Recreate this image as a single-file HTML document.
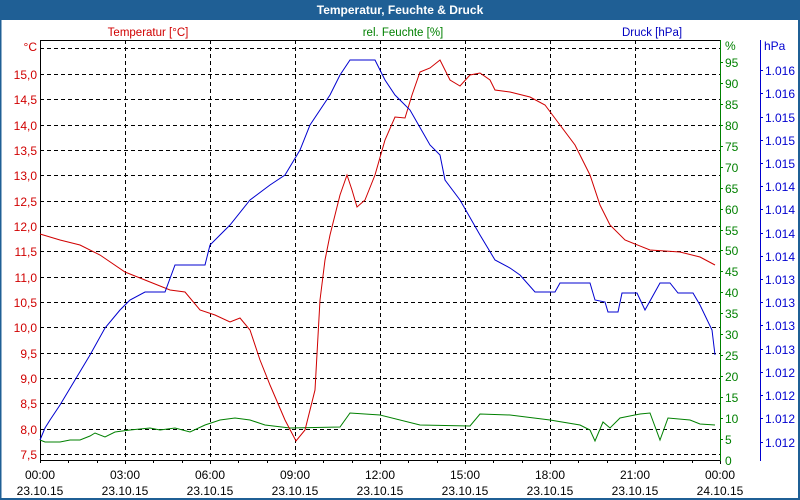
<!DOCTYPE html>
<html><head><meta charset="utf-8"><style>
html,body{margin:0;padding:0;background:#fff;}
body{width:800px;height:500px;overflow:hidden;position:relative;font-family:"Liberation Sans",sans-serif;}
</style></head><body>
<svg width="800" height="500" xmlns="http://www.w3.org/2000/svg" style="position:absolute;left:0;top:0" font-family="Liberation Sans, sans-serif" font-size="12">
<rect x="0" y="0" width="800" height="500" fill="#fff"/>
<rect x="0" y="0" width="800" height="20" fill="#1f5f95"/>
<rect x="0" y="0" width="1.5" height="500" fill="#1f5f95"/>
<rect x="798" y="0" width="2" height="500" fill="#1f5f95"/>
<rect x="0" y="498" width="800" height="2" fill="#1f5f95"/>
<text x="400" y="14" fill="#fff" font-weight="bold" font-size="12" text-anchor="middle">Temperatur, Feuchte &amp; Druck</text>
<text x="148" y="36" fill="#d00000" text-anchor="middle" font-size="11.5">Temperatur [°C]</text>
<text x="403" y="36" fill="#008000" text-anchor="middle" font-size="11.5">rel. Feuchte [%]</text>
<text x="652" y="36" fill="#0000c0" text-anchor="middle" font-size="11.5">Druck [hPa]</text>
<g stroke="#000" stroke-width="1" stroke-dasharray="4,3" fill="none">
<path d="M40 48.5H720M40 74.5H720M40 99.5H720M40 125.5H720M40 150.5H720M40 175.5H720M40 201.5H720M40 226.5H720M40 251.5H720M40 277.5H720M40 302.5H720M40 327.5H720M40 353.5H720M40 378.5H720M40 403.5H720M40 429.5H720M40 454.5H720"/>
<path d="M125.5 40V460M210.5 40V460M295.5 40V460M380.5 40V460M465.5 40V460M550.5 40V460M635.5 40V460"/>
</g>
<path d="M40.5 40V460.5H720M40 40.5H720" stroke="#000" fill="none"/>
<path d="M40.5 460v3M68.5 460v3M97.5 460v3M125.5 460v4M153.5 460v3M182.5 460v3M210.5 460v4M238.5 460v3M267.5 460v3M295.5 460v4M323.5 460v3M352.5 460v3M380.5 460v4M408.5 460v3M437.5 460v3M465.5 460v4M493.5 460v3M522.5 460v3M550.5 460v4M578.5 460v3M607.5 460v3M635.5 460v4M663.5 460v3M692.5 460v3M720.5 460v4" stroke="#000"/>
<path d="M720.5 40V461" stroke="#008000"/>
<path d="M760.5 40V461" stroke="#0000d0"/>
<g fill="#d00000" text-anchor="end">
<text x="37" y="51">°C</text>
<text x="37" y="79">15,0</text><text x="37" y="104">14,5</text><text x="37" y="130">14,0</text><text x="37" y="155">13,5</text><text x="37" y="180">13,0</text><text x="37" y="206">12,5</text><text x="37" y="231">12,0</text><text x="37" y="256">11,5</text><text x="37" y="282">11,0</text><text x="37" y="307">10,5</text><text x="37" y="332">10,0</text><text x="37" y="358">9,5</text><text x="37" y="383">9,0</text><text x="37" y="408">8,5</text><text x="37" y="434">8,0</text><text x="37" y="459">7,5</text>
</g>
<g fill="#008000">
<text x="725" y="50">%</text>
<text x="725" y="67">95</text><text x="725" y="88">90</text><text x="725" y="109">85</text><text x="725" y="130">80</text><text x="725" y="151">75</text><text x="725" y="172">70</text><text x="725" y="193">65</text><text x="725" y="214">60</text><text x="725" y="235">55</text><text x="725" y="255">50</text><text x="725" y="276">45</text><text x="725" y="297">40</text><text x="725" y="318">35</text><text x="725" y="339">30</text><text x="725" y="360">25</text><text x="725" y="381">20</text><text x="725" y="402">15</text><text x="725" y="423">10</text><text x="725" y="444">5</text><text x="725" y="465">0</text>
</g>
<path d="M720 62.5h3M720 83.5h3M720 104.5h3M720 125.5h3M720 146.5h3M720 167.5h3M720 188.5h3M720 209.5h3M720 230.5h3M720 250.5h3M720 271.5h3M720 292.5h3M720 313.5h3M720 334.5h3M720 355.5h3M720 376.5h3M720 397.5h3M720 418.5h3M720 439.5h3" stroke="#008000"/>
<g fill="#0000d0">
<text x="764" y="50">hPa</text>
<text x="765" y="75">1.016</text><text x="765" y="98">1.016</text><text x="765" y="122">1.015</text><text x="765" y="145">1.015</text><text x="765" y="168">1.015</text><text x="765" y="191">1.014</text><text x="765" y="214">1.014</text><text x="765" y="238">1.014</text><text x="765" y="261">1.014</text><text x="765" y="284">1.013</text><text x="765" y="307">1.013</text><text x="765" y="330">1.013</text><text x="765" y="354">1.013</text><text x="765" y="377">1.012</text><text x="765" y="400">1.012</text><text x="765" y="423">1.012</text><text x="765" y="447">1.012</text>
</g>
<path d="M760 70.5h3M760 93.5h3M760 117.5h3M760 140.5h3M760 163.5h3M760 186.5h3M760 209.5h3M760 233.5h3M760 256.5h3M760 279.5h3M760 302.5h3M760 325.5h3M760 349.5h3M760 372.5h3M760 395.5h3M760 418.5h3M760 442.5h3" stroke="#0000d0"/>
<g fill="#000" text-anchor="middle">
<text x="40" y="479">00:00</text><text x="40" y="495">23.10.15</text>
<text x="125" y="479">03:00</text><text x="125" y="495">23.10.15</text>
<text x="210" y="479">06:00</text><text x="210" y="495">23.10.15</text>
<text x="295" y="479">09:00</text><text x="295" y="495">23.10.15</text>
<text x="380" y="479">12:00</text><text x="380" y="495">23.10.15</text>
<text x="465" y="479">15:00</text><text x="465" y="495">23.10.15</text>
<text x="550" y="479">18:00</text><text x="550" y="495">23.10.15</text>
<text x="635" y="479">21:00</text><text x="635" y="495">23.10.15</text>
<text x="720" y="479">00:00</text><text x="720" y="495">24.10.15</text>
</g>
<polyline fill="none" stroke="#008000" stroke-width="1" points="40,440 45,442 60,442 70,440 80,440 90,436 95,433 105,437 115,432 130,430 150,428 160,430 175,428 190,432 205,425 220,420 235,418 250,420 265,425 290,428 340,427 350,413 380,415 420,425 470,426 480,414 510,415 550,420 580,425 590,430 595,441 603,422 610,428 620,418 640,414 650,413 660,440 668,418 690,420 700,424 715,425"/>
<polyline fill="none" stroke="#d00000" stroke-width="1" points="40,234 60,240 80,245 100,255 125,272 150,282 170,290 185,292 200,310 215,315 230,322 240,318 250,330 260,360 270,385 285,420 296,441 305,430 315,390 320,300 325,260 330,235 340,195 347,175 352,190 357,207 365,200 375,175 385,140 395,117 405,118 412,95 420,72 430,68 440,60 450,80 460,86 470,75 480,73 490,80 495,90 510,92 530,97 545,105 560,125 575,145 590,175 600,205 610,225 625,240 650,250 680,252 700,257 715,265"/>
<polyline fill="none" stroke="#0000d0" stroke-width="1" points="40,440 45,428 50,420 60,405 75,380 90,355 105,328 120,310 130,300 145,292 165,292 175,265 205,265 210,245 230,225 250,200 270,185 285,175 300,150 310,125 330,95 340,75 350,60 375,60 385,80 395,95 410,110 430,145 440,155 445,180 460,200 480,235 495,260 510,268 520,275 535,292 555,292 560,283 590,283 595,300 605,302 608,312 618,312 622,293 637,293 645,310 660,283 670,283 678,293 693,293 700,305 712,330 715,355"/>
</svg>
</body></html>
